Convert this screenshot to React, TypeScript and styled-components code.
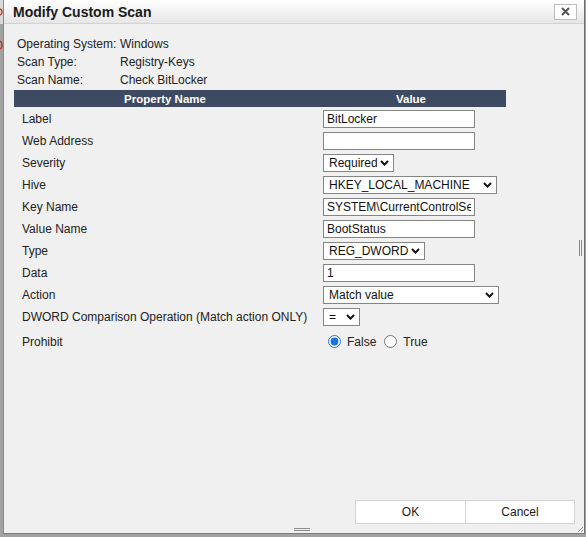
import React, { useState } from 'react';
import styled, { createGlobalStyle } from 'styled-components';

const GlobalStyle = createGlobalStyle`
  html, body {
    margin: 0;
    padding: 0;
    background: #a2a2a2;
    font-family: "Liberation Sans", Arial, sans-serif;
    color: #222;
  }
`;

const Page = styled.div`
  width: 586px;
  height: 537px;
  display: flex;
  align-items: flex-start;
  overflow: hidden;
`;

const Backdrop = styled.svg`
  flex: none;
  width: 3px;
  height: 537px;
`;

const Dialog = styled.div`
  position: relative;
  width: 580px;
  height: 533px;
  display: flex;
  flex-direction: column;
  background: #f0f0f0;
  border-left: 1px solid #8a8a8a;
  border-right: 1px solid #6e6e6e;
  border-bottom: 1px solid #7c7c7c;
`;

const TitleBar = styled.div`
  height: 23px;
  display: flex;
  align-items: center;
  justify-content: space-between;
  padding: 0 7px 0 9px;
  background: linear-gradient(#ffffff, #e6e6e6);
  border-bottom: 1px solid #d2d2d2;
`;

const Title = styled.span`
  font-size: 14px;
  font-weight: bold;
  color: #1a1a1a;
`;

const CloseButton = styled.button`
  width: 23px;
  height: 16px;
  padding: 0;
  display: flex;
  align-items: center;
  justify-content: center;
  background: #fff;
  border: 1px solid #bcbcbc;
  cursor: pointer;
`;

const Content = styled.div`
  flex: 1;
  padding: 11px 0 0 10px;
`;

const InfoGrid = styled.div`
  display: grid;
  grid-template-columns: 103px auto;
  grid-auto-rows: 18px;
  align-items: center;
  margin-left: 3px;
  font-size: 12px;
`;

const PropTable = styled.table`
  width: 492px;
  margin-top: 1px;
  border-collapse: collapse;
  font-size: 12px;
`;

const HeadCell = styled.th`
  height: 17px;
  padding: 0;
  background: #3e4a62;
  color: #fff;
  font-size: 11.5px;
  font-weight: bold;
  text-align: center;
`;

const NameCell = styled.td`
  width: 294px;
  padding: 1px 0 0 8px;
  white-space: nowrap;
  vertical-align: middle;
`;

const ValueCell = styled.td`
  padding: 1px 0 0 7px;
  vertical-align: middle;
`;

const Row = styled.tr<{ $tall?: boolean }>`
  height: ${(p) => (p.$tall ? 28 : 22)}px;
`;

const TextInput = styled.input`
  box-sizing: border-box;
  width: 152px;
  height: 18px;
  margin: 0;
  padding: 0 3px;
  border: 1px solid #858585;
  background: #fff;
  font-family: inherit;
  font-size: 12px;
  color: #111;
  display: block;
`;

const SelectBox = styled.span<{ $width: number }>`
  position: relative;
  display: block;
  width: ${(p) => p.$width}px;
  height: 18px;
`;

const NativeSelect = styled.select`
  box-sizing: border-box;
  appearance: none;
  width: 100%;
  height: 100%;
  margin: 0;
  padding: 0 16px 0 5px;
  border: 1px solid #858585;
  border-radius: 0;
  background: #fff;
  font-family: inherit;
  font-size: 12px;
  color: #111;
`;

const Chevron = styled.svg`
  position: absolute;
  right: 5px;
  top: 6px;
  pointer-events: none;
`;

const RadioGroup = styled.div`
  display: flex;
  align-items: center;
  padding-left: 5px;
  gap: 8px;
`;

const RadioLabel = styled.label`
  display: flex;
  align-items: center;
  gap: 6px;
  font-size: 12px;
`;

const Radio = styled.input`
  width: 13px;
  height: 13px;
  margin: 0;
  accent-color: #1a73d9;
`;

const Footer = styled.div`
  display: flex;
  justify-content: flex-end;
  padding: 0 9px 9px 0;
`;

const FooterButton = styled.button`
  width: 111px;
  height: 24px;
  margin: 0;
  background: #fff;
  border: 1px solid #d4d4d4;
  font-family: inherit;
  font-size: 12px;
  color: #1a1a1a;
  cursor: pointer;

  & + & {
    width: 110px;
    margin-left: -1px;
  }
`;

const Grip = styled.div<{ $side: 'bottom' | 'right' }>`
  position: absolute;
  ${(p) =>
    p.$side === 'bottom'
      ? `left: 290px; bottom: 2px; width: 16px; height: 1px;
         border-top: 1px solid #8c8c8c; border-bottom: 1px solid #8c8c8c;`
      : `right: 2px; top: 240px; width: 1px; height: 16px;
         border-left: 1px solid #8c8c8c; border-right: 1px solid #8c8c8c;`}
`;

const CornerGrip = styled.svg`
  position: absolute;
  right: 0;
  bottom: 0;
`;

function Select({ width, value, options }: { width: number; value: string; options: string[] }) {
  const [v, setV] = useState(value);
  return (
    <SelectBox $width={width}>
      <NativeSelect value={v} onChange={(e) => setV(e.target.value)}>
        {options.map((o) => (
          <option key={o}>{o}</option>
        ))}
      </NativeSelect>
      <Chevron width="9" height="6" viewBox="0 0 9 6">
        <path d="M1 1 L4.5 4.6 L8 1" fill="none" stroke="#111" strokeWidth="2" />
      </Chevron>
    </SelectBox>
  );
}

export default function App() {
  const [prohibit, setProhibit] = useState('false');

  return (
    <>
      <GlobalStyle />
      <Page>
        <Backdrop viewBox="0 0 3 537">
          <rect x="0" y="0" width="3" height="24" fill="#d9d9d9" />
          <path d="M0 9 A3 3 0 0 1 2 12 A3 3 0 0 1 0 15" fill="none" stroke="#c0392b" strokeWidth="1.5" />
          <path d="M0 41 A4 4 0 0 1 2 45 A4 4 0 0 1 0 49" fill="none" stroke="#c0392b" strokeWidth="1.5" />
        </Backdrop>
        <Dialog>
          <TitleBar>
            <Title>Modify Custom Scan</Title>
            <CloseButton aria-label="Close">
              <svg width="9" height="9" viewBox="0 0 9 9">
                <path d="M1 1 L8 8 M8 1 L1 8" stroke="#555" strokeWidth="2" />
              </svg>
            </CloseButton>
          </TitleBar>

          <Content>
            <InfoGrid>
              <span>Operating System:</span>
              <span>Windows</span>
              <span>Scan Type:</span>
              <span>Registry-Keys</span>
              <span>Scan Name:</span>
              <span>Check BitLocker</span>
            </InfoGrid>

            <PropTable>
              <thead>
                <tr>
                  <HeadCell>Property Name</HeadCell>
                  <HeadCell>Value</HeadCell>
                </tr>
              </thead>
              <tbody>
                <Row>
                  <NameCell>Label</NameCell>
                  <ValueCell>
                    <TextInput defaultValue="BitLocker" />
                  </ValueCell>
                </Row>
                <Row>
                  <NameCell>Web Address</NameCell>
                  <ValueCell>
                    <TextInput defaultValue="" />
                  </ValueCell>
                </Row>
                <Row>
                  <NameCell>Severity</NameCell>
                  <ValueCell>
                    <Select width={71} value="Required" options={['Required', 'Optional']} />
                  </ValueCell>
                </Row>
                <Row>
                  <NameCell>Hive</NameCell>
                  <ValueCell>
                    <Select
                      width={174}
                      value="HKEY_LOCAL_MACHINE"
                      options={['HKEY_LOCAL_MACHINE', 'HKEY_CURRENT_USER', 'HKEY_USERS']}
                    />
                  </ValueCell>
                </Row>
                <Row>
                  <NameCell>Key Name</NameCell>
                  <ValueCell>
                    <TextInput defaultValue="SYSTEM\CurrentControlSet\Control\BitLocker" />
                  </ValueCell>
                </Row>
                <Row>
                  <NameCell>Value Name</NameCell>
                  <ValueCell>
                    <TextInput defaultValue="BootStatus" />
                  </ValueCell>
                </Row>
                <Row>
                  <NameCell>Type</NameCell>
                  <ValueCell>
                    <Select width={102} value="REG_DWORD" options={['REG_DWORD', 'REG_SZ', 'REG_QWORD']} />
                  </ValueCell>
                </Row>
                <Row>
                  <NameCell>Data</NameCell>
                  <ValueCell>
                    <TextInput defaultValue="1" />
                  </ValueCell>
                </Row>
                <Row>
                  <NameCell>Action</NameCell>
                  <ValueCell>
                    <Select width={176} value="Match value" options={['Match value', 'Key exists', 'Value exists']} />
                  </ValueCell>
                </Row>
                <Row>
                  <NameCell>DWORD Comparison Operation (Match action ONLY)</NameCell>
                  <ValueCell>
                    <Select width={37} value="=" options={['=', '<', '>']} />
                  </ValueCell>
                </Row>
                <Row $tall>
                  <NameCell>Prohibit</NameCell>
                  <ValueCell>
                    <RadioGroup>
                      <RadioLabel>
                        <Radio
                          type="radio"
                          name="prohibit"
                          checked={prohibit === 'false'}
                          onChange={() => setProhibit('false')}
                        />
                        False
                      </RadioLabel>
                      <RadioLabel>
                        <Radio
                          type="radio"
                          name="prohibit"
                          checked={prohibit === 'true'}
                          onChange={() => setProhibit('true')}
                        />
                        True
                      </RadioLabel>
                    </RadioGroup>
                  </ValueCell>
                </Row>
              </tbody>
            </PropTable>
          </Content>

          <Footer>
            <FooterButton>OK</FooterButton>
            <FooterButton>Cancel</FooterButton>
          </Footer>

          <Grip $side="right" />
          <Grip $side="bottom" />
          <CornerGrip width="7" height="7" viewBox="0 0 7 7">
            <path d="M6 1 L1 6 M6 4 L4 6" stroke="#9a9a9a" strokeWidth="1" />
          </CornerGrip>
        </Dialog>
      </Page>
    </>
  );
}
